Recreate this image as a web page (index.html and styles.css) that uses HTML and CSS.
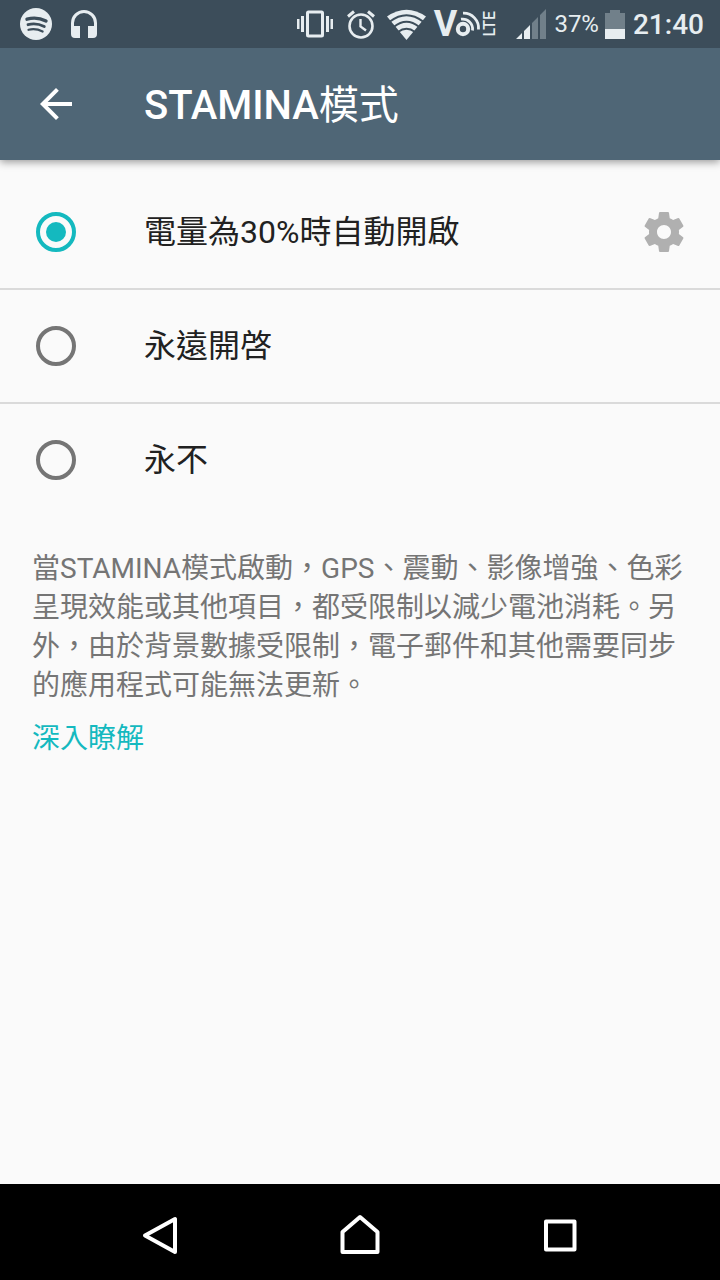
FILE: index.html
```html
<!DOCTYPE html>
<html lang="zh-TW">
<head>
<meta charset="utf-8">
<meta name="viewport" content="width=device-width, initial-scale=1">
<title>STAMINA模式</title>
<link rel="stylesheet" href="styles.css">
</head>
<body>
<div class="screen">
  <div class="status-bar">
    <div class="status-group notifications">
      <svg width="32" height="32" viewBox="0 0 32 32" aria-hidden="true">
        <circle cx="16" cy="16" r="16" fill="#e7edf0"/>
        <g fill="none" stroke="#3c4d5a" stroke-linecap="round">
          <path d="M7 11.200C13 9.500 20 10 26 13" stroke-width="3.400"/>
          <path d="M8 16.700C13 15.400 19 15.900 24.300 18.600" stroke-width="2.800"/>
          <path d="M8.500 21.800C13 20.700 18 21.200 22.600 23.500" stroke-width="2.200"/>
        </g>
      </svg>
      <svg width="26" height="28" viewBox="0 0 26 28" aria-hidden="true">
        <path d="M0 24V13a13 13 0 0 1 26 0v11q0 4-4 4h-5V16h6v-3a10 10 0 0 0-20 0v3h6v12H4q-4 0-4-4z" fill="#e7edf0"/>
      </svg>
    </div>
    <div class="status-group system">
      <svg class="vibrate" width="36" height="28" viewBox="0 0 36 28" aria-hidden="true">
        <rect x="10.500" y="2" width="15" height="24" rx="1" fill="none" stroke="#e7edf0" stroke-width="3"/>
        <path d="M4 6h3v16H4zM0 9h2.500v10H0zM29 6h3v16h-3zM33.500 9H36v10h-2.500z" fill="#e7edf0"/>
      </svg>
      <svg class="alarm" width="28" height="29" viewBox="0 0 28 29" fill="none" stroke="#e7edf0" aria-hidden="true">
        <circle cx="14" cy="16" r="11.500" stroke-width="2.600"/>
        <path d="M1 6.500 7 1.500M27 6.500 21 1.500" stroke-width="3"/>
        <path d="M13.500 9v7.500l5.500 4" stroke-width="2.400"/>
      </svg>
      <svg class="wifi" width="39" height="32" viewBox="0 0 39 32" aria-hidden="true">
        <path d="M0 8.500Q19.500-5 39 8.500L19.500 32z" fill="#e7edf0"/>
        <g fill="none" stroke="#3c4d5a" stroke-width="2">
          <path d="M3 13.500Q19.500 1 36 13.500M7 18.800Q19.500 8.800 32 18.800M11 24Q19.500 17.500 28 24"/>
        </g>
      </svg>
      <div class="volte">
        <span class="volte-v">V</span>
        <svg class="volte-o" width="26" height="26" viewBox="0 0 26 26" fill="none" stroke="#e7edf0" aria-hidden="true">
          <circle cx="8" cy="18" r="5.200" stroke-width="4"/>
          <path d="M6 8.200A10 10 0 0 1 17.500 19.500M8 2.200A15 15 0 0 1 23.500 18.500" stroke-width="2.800"/>
        </svg>
        <span class="volte-lte">LTE</span>
      </div>
      <svg class="signal" width="30" height="30" viewBox="0 0 30 30" aria-hidden="true">
        <path d="M0 30 6 24v6zM8 22l6-6v14H8z" fill="#e7edf0"/>
        <path d="M16 14l6-6v22h-6zM24 6l6-6v30h-6z" fill="#71808a"/>
      </svg>
      <span class="percent">37%</span>
      <svg class="battery" width="20" height="29" viewBox="0 0 20 29" aria-hidden="true">
        <path d="M0 3h5V0h10v3h5v16H0z" fill="#71808a"/>
        <path d="M0 19h20v10H0z" fill="#e7edf0"/>
      </svg>
      <time class="clock">21:40</time>
    </div>
  </div>

  <header class="app-bar">
    <button class="icon-button" type="button" aria-label="返回">
      <svg width="48" height="48" viewBox="0 0 24 24" fill="#fff"><path d="M20 11H7.830l5.590-5.590L12 4l-8 8 8 8 1.410-1.410L7.830 13H20v-2z"/></svg>
    </button>
    <h1 class="title">STAMINA<span class="title-cjk">模式</span></h1>
  </header>

  <main class="content">
    <div class="options" role="radiogroup" aria-label="STAMINA模式">
      <div class="option">
        <label class="option-label"><input class="radio" type="radio" name="mode" checked><span>電量為30%時自動開啟</span></label>
        <button class="icon-button" type="button" aria-label="設定">
          <svg width="48" height="48" viewBox="0 0 24 24" fill="#b0b0b0"><path d="M19.430 12.980c.04-.32.07-.64.07-.98s-.03-.66-.07-.98l2.110-1.650c.19-.15.24-.42.12-.64l-2-3.460c-.12-.22-.39-.3-.61-.22l-2.490 1c-.52-.4-1.080-.73-1.690-.98l-.38-2.650C14.460 2.180 14.250 2 14 2h-4c-.25 0-.46.18-.49.42l-.38 2.650c-.61.25-1.170.59-1.690.98l-2.490-1c-.23-.09-.49 0-.61.22l-2 3.460c-.13.22-.07.49.12.64l2.110 1.650c-.04.32-.07.65-.07.98s.03.66.07.98l-2.110 1.650c-.19.15-.24.42-.12.64l2 3.460c.12.22.39.3.61.22l2.490-1c.52.4 1.080.73 1.690.98l.38 2.650c.03.24.24.42.49.42h4c.25 0 .46-.18.49-.42l.38-2.650c.61-.25 1.170-.59 1.690-.98l2.490 1c.23.09.49 0 .61-.22l2-3.460c.12-.22.07-.49-.12-.64l-2.110-1.650zM12 15.500c-1.930 0-3.500-1.570-3.500-3.500s1.570-3.500 3.500-3.500 3.500 1.570 3.500 3.500-1.570 3.500-3.500 3.500z"/></svg>
        </button>
      </div>
      <div class="option">
        <label class="option-label"><input class="radio" type="radio" name="mode"><span>永遠開啓</span></label>
      </div>
      <div class="option">
        <label class="option-label"><input class="radio" type="radio" name="mode"><span>永不</span></label>
      </div>
    </div>
    <div class="info">
      <p class="description">當STAMINA模式啟動，GPS、震動、影像增強、色彩呈現效能或其他項目，都受限制以減少電池消耗。另外，由於背景數據受限制，電子郵件和其他需要同步的應用程式可能無法更新。</p>
      <a class="learn-more" href="#">深入瞭解</a>
    </div>
  </main>

  <nav class="nav-bar" aria-label="系統導覽">
    <button class="icon-button" type="button" aria-label="上一頁">
      <svg width="48" height="48" viewBox="0 0 48 48" fill="none" stroke="#fff" stroke-width="4" stroke-linejoin="round"><path d="M9 23.500 39 7v33z"/></svg>
    </button>
    <button class="icon-button" type="button" aria-label="主畫面">
      <svg width="48" height="48" viewBox="0 0 48 48" fill="none" stroke="#fff" stroke-width="4" stroke-linejoin="round"><path d="M6.500 40V20L24 5l17.500 15v20z"/></svg>
    </button>
    <button class="icon-button" type="button" aria-label="最近使用">
      <svg width="48" height="48" viewBox="0 0 48 48" fill="none" stroke="#fff" stroke-width="4" stroke-linejoin="round"><path d="M10 9.500h28.500v28H10z"/></svg>
    </button>
  </nav>
</div>
</body>
</html>
```
FILE: styles.css
```css
* {
  box-sizing: border-box;
}

body {
  margin: 0;
  background: #fafafa;
  color: #212121;
  font-family: Roboto, "Noto Sans CJK TC", sans-serif;
}

svg {
  display: block;
  flex: none;
}

.screen {
  display: flex;
  flex-direction: column;
  min-height: 100vh;
}

.status-bar {
  position: relative;
  z-index: 2;
  display: flex;
  align-items: center;
  justify-content: space-between;
  height: 48px;
  padding: 0 16px 0 20px;
  background: #3c4d5a;
  color: #e7edf0;
}

.status-group {
  display: flex;
  align-items: center;
}

.notifications {
  gap: 19px;
}

.alarm {
  margin-left: 14px;
}

.wifi {
  margin-left: 12px;
}

.volte {
  display: flex;
  align-items: center;
  margin-left: 8px;
}

.volte-v {
  font-size: 36px;
  font-weight: 700;
  line-height: 48px;
}

.volte-o {
  margin-left: -2px;
}

.volte-lte {
  margin-left: 1px;
  font-size: 16px;
  font-weight: 500;
  line-height: 16px;
  writing-mode: vertical-rl;
  transform: rotate(180deg);
}

.signal {
  margin-left: 18px;
}

.percent {
  margin-left: 8px;
  font-size: 24px;
}

.battery {
  margin-left: 6px;
}

.clock {
  margin-left: 8px;
  font-size: 28px;
  font-weight: 500;
}

.app-bar {
  position: relative;
  z-index: 1;
  display: flex;
  align-items: center;
  gap: 64px;
  height: 112px;
  padding: 0 32px;
  background: #4f6676;
  color: #fff;
  box-shadow: 0 2px 8px rgba(0, 0, 0, 0.4);
}

.icon-button {
  flex: none;
  padding: 0;
  border: 0;
  background: none;
}

.title {
  margin: 0;
  padding-top: 4px;
  font-size: 40px;
  font-weight: 500;
  line-height: 56px;
}

.title-cjk {
  font-weight: 400;
}

.content {
  flex: 1;
  padding-top: 16px;
}

.option {
  display: flex;
  align-items: center;
  padding: 0 32px 0 36px;
}

.option + .option {
  border-top: 2px solid #dadada;
}

.option-label {
  display: flex;
  flex: 1;
  align-items: center;
  gap: 68px;
  min-height: 112px;
  font-size: 32px;
  line-height: 50px;
}

.radio {
  display: grid;
  flex: none;
  place-items: center;
  width: 40px;
  height: 40px;
  margin: 0;
  border: 4px solid #757575;
  border-radius: 50%;
  appearance: none;
}

.radio:checked {
  border-color: #14b9bf;
}

.radio:checked::before {
  width: 20px;
  height: 20px;
  border-radius: 50%;
  background: #14b9bf;
  content: "";
}

.info {
  padding: 33px 32px;
  font-size: 28px;
  line-height: 39px;
}

.description {
  margin: 0 0 14px;
  color: #757575;
}

.learn-more {
  color: #14b9bf;
  text-decoration: none;
}

.nav-bar {
  display: grid;
  grid-template-columns: repeat(3, 1fr);
  align-items: center;
  justify-items: center;
  height: 96px;
  padding: 8px 60px 0;
  background: #000;
}
```
